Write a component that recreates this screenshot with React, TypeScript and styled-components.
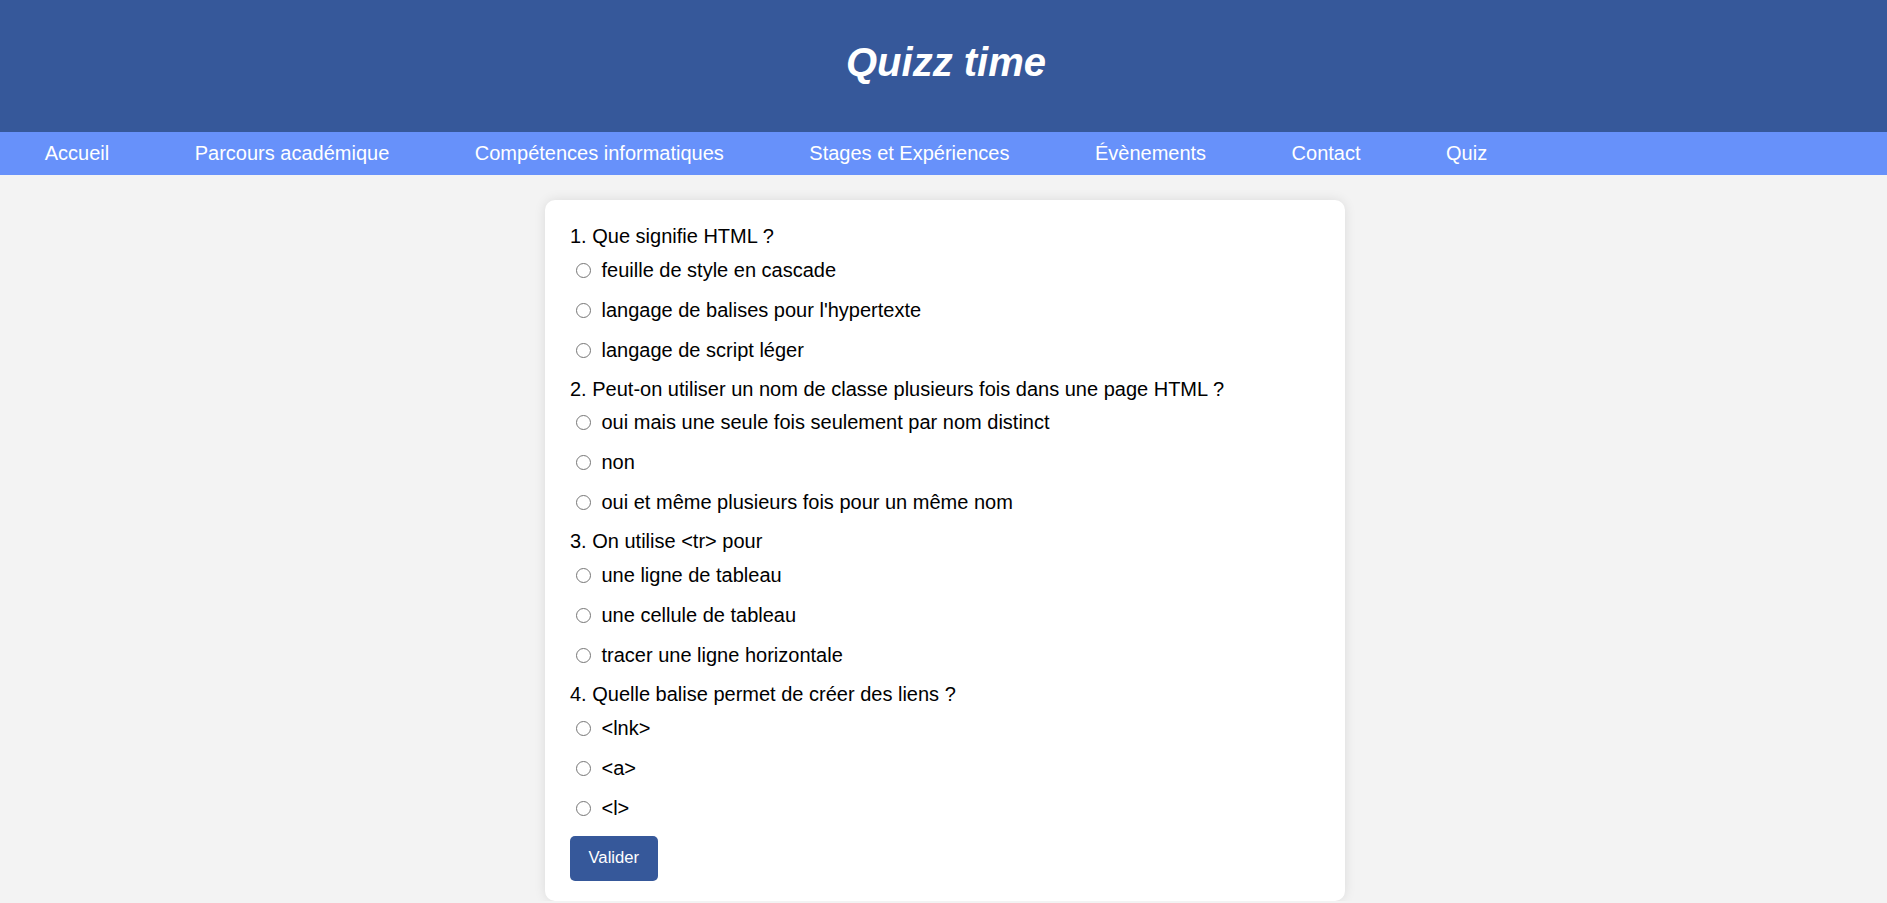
import React from "react";
import styled, { createGlobalStyle } from "styled-components";

const GlobalStyle = createGlobalStyle`
  html, body {
    margin: 0;
    padding: 0;
    background: #f3f3f3;
    font-family: "Liberation Sans", Arial, sans-serif;
  }
  * { box-sizing: border-box; }
`;

const Header = styled.header`
  height: 132px;
  background: #36589a;
  display: flex;
  align-items: center;
  justify-content: center;
  padding: 0 0 8px 5px;
`;

const Title = styled.h1`
  margin: 0;
  color: #ffffff;
  font-size: 40px;
  font-weight: bold;
  font-style: italic;
`;

const Nav = styled.nav`
  height: 43px;
  background: #6791fa;
`;

const NavList = styled.ul`
  list-style: none;
  margin: 0;
  padding: 0 0 0 2px;
  height: 100%;
  display: flex;
  align-items: center;
`;

const NavLink = styled.a`
  display: block;
  padding: 0 42.75px;
  color: #ffffff;
  font-size: 20px;
  line-height: 43px;
  text-decoration: none;
  cursor: pointer;
`;

const Card = styled.form`
  width: 800px;
  margin: 25px 0 0 calc(50% - 398.5px);
  background: #ffffff;
  border-radius: 10px;
  box-shadow: 0 0 12px rgba(0, 0, 0, 0.1);
  padding: 25px 25px 20px;
`;

const QuestionBlock = styled.div`
  & + & {
    margin-top: 7.4px;
  }
`;

const Question = styled.p`
  margin: 0;
  font-size: 20px;
  line-height: 22px;
  color: #000;
`;

const Options = styled.div`
  margin-top: 3.3px;
  display: flex;
  flex-direction: column;
`;

const Option = styled.label`
  height: 40px;
  display: flex;
  align-items: center;
  font-size: 20px;
  color: #000;
  cursor: pointer;
`;

const Radio = styled.input`
  appearance: none;
  -webkit-appearance: none;
  width: 15px;
  height: 15px;
  margin: 0 10.5px 0 6px;
  border: 1.25px solid #767676;
  border-radius: 50%;
  background: #fff;
  flex: none;
  &:checked {
    border-color: #36589a;
    background: radial-gradient(circle, #36589a 0 3.5px, #fff 4px);
  }
`;

const SubmitButton = styled.button`
  margin-top: 7.6px;
  height: 45px;
  padding: 0 18.5px;
  border: none;
  border-radius: 5px;
  background: #36589a;
  color: #ffffff;
  font-family: "Liberation Sans", Arial, sans-serif;
  font-size: 16.67px;
  cursor: pointer;
`;

const navItems = [
  "Accueil",
  "Parcours académique",
  "Compétences informatiques",
  "Stages et Expériences",
  "Évènements",
  "Contact",
  "Quiz",
];

const questions = [
  {
    q: "1. Que signifie HTML ?",
    options: [
      "feuille de style en cascade",
      "langage de balises pour l'hypertexte",
      "langage de script léger",
    ],
  },
  {
    q: "2. Peut-on utiliser un nom de classe plusieurs fois dans une page HTML ?",
    options: [
      "oui mais une seule fois seulement par nom distinct",
      "non",
      "oui et même plusieurs fois pour un même nom",
    ],
  },
  {
    q: "3. On utilise <tr> pour",
    options: [
      "une ligne de tableau",
      "une cellule de tableau",
      "tracer une ligne horizontale",
    ],
  },
  {
    q: "4. Quelle balise permet de créer des liens ?",
    options: ["<lnk>", "<a>", "<l>"],
  },
];

export default function App() {
  return (
    <>
      <GlobalStyle />
      <Header>
        <Title>Quizz time</Title>
      </Header>
      <Nav>
        <NavList>
          {navItems.map((item) => (
            <li key={item}>
              <NavLink>{item}</NavLink>
            </li>
          ))}
        </NavList>
      </Nav>
      <Card onSubmit={(e) => e.preventDefault()}>
        {questions.map((qq, i) => (
          <QuestionBlock key={i}>
            <Question>{qq.q}</Question>
            <Options>
              {qq.options.map((o, j) => (
                <Option key={j}>
                  <Radio type="radio" name={`q${i}`} value={j} />
                  {o}
                </Option>
              ))}
            </Options>
          </QuestionBlock>
        ))}
        <SubmitButton type="submit">Valider</SubmitButton>
      </Card>
    </>
  );
}
